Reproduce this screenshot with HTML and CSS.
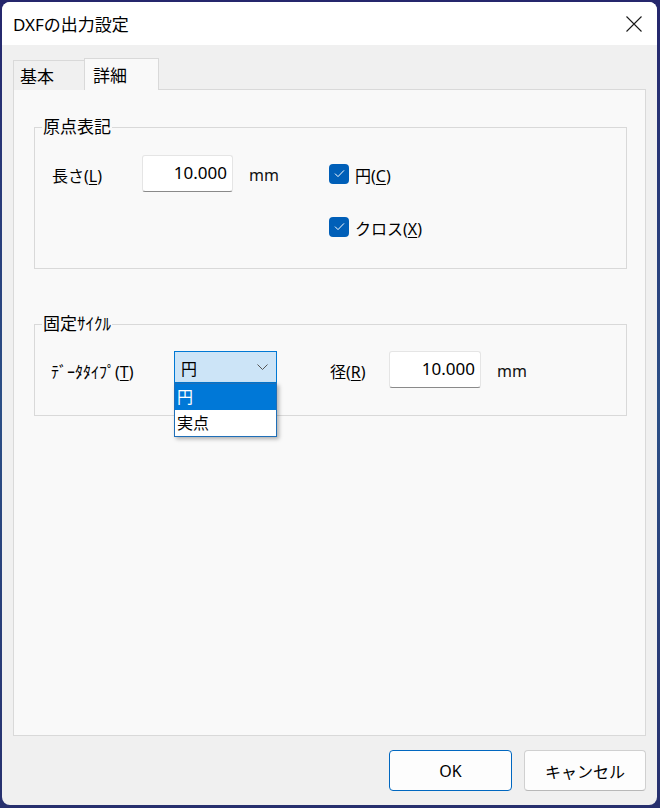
FILE: index.html
```html
<!DOCTYPE html>
<html lang="ja">
<head>
<meta charset="utf-8">
<title>DXFの出力設定</title>
<link rel="stylesheet" href="styles.css">
</head>
<body>
<div class="window">
  <div class="titlebar">
    <span class="title">DXFの出力設定</span>
    <span class="close">
      <svg width="16" height="16" viewBox="0 0 16 16"><path d="M0.5 0.5 L15.5 15.5 M15.5 0.5 L0.5 15.5" stroke="#1a1a1a" stroke-width="1.1" fill="none"/></svg>
    </span>
  </div>
  <div class="main">
    <div class="tabs">
      <div class="tab">基本</div>
      <div class="tab active">詳細</div>
    </div>
    <div class="panel">
      <fieldset class="group group1">
        <legend>原点表記</legend>
        <div class="grid1">
          <span class="label">長さ(<u>L</u>)</span>
          <span class="input">10.000</span>
          <span class="unit">mm</span>
          <label class="check"><span class="box"><svg width="11" height="9" viewBox="0 0 11 9"><path d="M1 4.6 L4 7.6 L10 1.4" stroke="#fff" stroke-width="1" fill="none"/></svg></span><span class="check-text">円(<u>C</u>)</span></label>
          <span></span><span></span><span></span>
          <label class="check"><span class="box"><svg width="11" height="9" viewBox="0 0 11 9"><path d="M1 4.6 L4 7.6 L10 1.4" stroke="#fff" stroke-width="1" fill="none"/></svg></span><span class="check-text">クロス(<u>X</u>)</span></label>
        </div>
      </fieldset>
      <fieldset class="group group2">
        <legend>固定ｻｲｸﾙ</legend>
        <div class="grid2">
          <span class="label">ﾃﾞｰﾀﾀｲﾌﾟ(<u>T</u>)</span>
          <div class="combo">
            <span class="combo-value">円</span>
            <svg width="11" height="6" viewBox="0 0 11 6"><path d="M0.5 0.5 L5.5 5.5 L10.5 0.5" stroke="#555" stroke-width="1" fill="none"/></svg>
            <ul class="dropdown">
              <li class="selected">円</li>
              <li>実点</li>
            </ul>
          </div>
          <span class="label label-r">径(<u>R</u>)</span>
          <span class="input">10.000</span>
          <span class="unit">mm</span>
        </div>
      </fieldset>
    </div>
    <div class="buttons">
      <button class="btn default">OK</button>
      <button class="btn">キャンセル</button>
    </div>
  </div>
</div>
</body>
</html>
```
FILE: styles.css
```css
* { box-sizing: border-box; }
html, body { margin: 0; padding: 0; }
body {
  width: 660px;
  height: 808px;
  overflow: hidden;
  background: linear-gradient(180deg, #25266c 0%, #2b4f86 50%, #27306e 100%);
  font-family: "Segoe UI", "Noto Sans", "Noto Sans CJK JP", sans-serif;
  font-size: 16px;
  color: #000;
}
.window {
  margin: 2px 0 0 2px;
  width: 655px;
  height: 803px;
  border-radius: 8px;
  background: #f0f0f0;
  overflow: hidden;
  display: flex;
  flex-direction: column;
}
.titlebar {
  height: 43px;
  background: #fff;
  display: flex;
  align-items: center;
  justify-content: space-between;
  padding-left: 11px;
  flex: none;
}
.title { font-size: 17px; }
.close {
  width: 46px;
  height: 43px;
  display: flex;
  align-items: center;
  justify-content: center;
}
.main {
  flex: 1;
  display: flex;
  flex-direction: column;
  padding: 13px 11px 14px 11px;
}
.tabs {
  display: flex;
  align-items: flex-end;
  height: 32px;
  margin-bottom: -1px;
  position: relative;
  z-index: 1;
  flex: none;
  font-size: 17px;
}
.tab {
  height: 30px;
  width: 71px;
  border: 1px solid #d9d9d9;
  border-right: none;
  border-bottom: none;
  background: #f0f0f0;
  padding-left: 6px;
  display: flex;
  align-items: center;
}
.tab.active {
  height: 32px;
  width: 75px;
  border-right: 1px solid #d9d9d9;
  background: #f9f9f9;
  padding-left: 8px;
}
.panel {
  flex: 1;
  background: #f9f9f9;
  border: 1px solid #d9d9d9;
  padding: 27px 18px 0 20px;
  display: flex;
  flex-direction: column;
}
.group {
  margin: 0;
  border: 1px solid #d9d9d9;
  padding: 0;
  min-width: 0;
}
.group legend {
  padding: 0 1px;
  margin-left: 7px;
  line-height: 20px;
  font-size: 17px;
}
.group1 { height: 152px; }
.group2 { height: 102px; margin-top: 45px; }
.grid1 {
  display: grid;
  grid-template-columns: 90px 91px 96px auto;
  grid-template-rows: 37px 37px;
  row-gap: 16px;
  align-items: center;
  padding: 18px 0 0 17px;
}
.grid1 .unit { margin-left: 16px; }
.grid2 {
  display: grid;
  grid-template-columns: 123px 103px 112px 92px auto;
  grid-template-rows: 37px;
  align-items: center;
  padding: 17px 0 0 16px;
}
.label-r { padding-left: 53px; }
.grid2 .unit { margin-left: 16px; }
.label { white-space: nowrap; padding-top: 3px; }
u { text-decoration-thickness: 1px; text-underline-offset: 2px; }
.input {
  height: 37px;
  background: #fff;
  border: 1px solid #e5e5e5;
  border-bottom: 1px solid #8a8a8a;
  border-radius: 3px;
  text-align: right;
  padding: 0 5px 0 0;
  line-height: 33px;
  font-size: 17px;
}
.unit {
  display: block;
  white-space: nowrap;
  padding-top: 3px;
  color: #111;
}
.check {
  display: flex;
  align-items: center;
  gap: 6px;
  white-space: nowrap;
}
.check-text { padding-top: 3px; }
.box {
  width: 20px;
  height: 20px;
  border-radius: 4px;
  background: #005fb8;
  display: flex;
  align-items: center;
  justify-content: center;
}
.combo {
  position: relative;
  align-self: start;
  height: 32px;
  background: #cce4f7;
  border: 1px solid #0078d4;
  display: flex;
  align-items: center;
  justify-content: space-between;
  padding: 0 8px 0 6px;
}
.combo-value { padding-top: 1px; }
.dropdown {
  position: absolute;
  left: -1px;
  top: 31px;
  width: 103px;
  margin: 0;
  padding: 0;
  list-style: none;
  background: #fff;
  border: 1px solid #1f6fb8;
  box-shadow: 2px 2px 4px rgba(0, 0, 0, 0.3);
  z-index: 2;
}
.dropdown li {
  height: 26px;
  line-height: 26px;
  padding-left: 2px;
}
.dropdown li.selected { background: #0078d7; color: #fff; }
.buttons {
  display: flex;
  justify-content: flex-end;
  gap: 12px;
  margin-top: 14px;
  flex: none;
}
.btn {
  width: 122px;
  height: 41px;
  border: 1px solid #d0d0d0;
  border-bottom-color: #b8b8b8;
  border-radius: 4px;
  background: #fdfdfd;
  font-family: inherit;
  font-size: 16px;
  color: #000;
  padding: 0;
}
.btn.default {
  width: 123px;
  border: 1px solid #0067c0;
}
```
